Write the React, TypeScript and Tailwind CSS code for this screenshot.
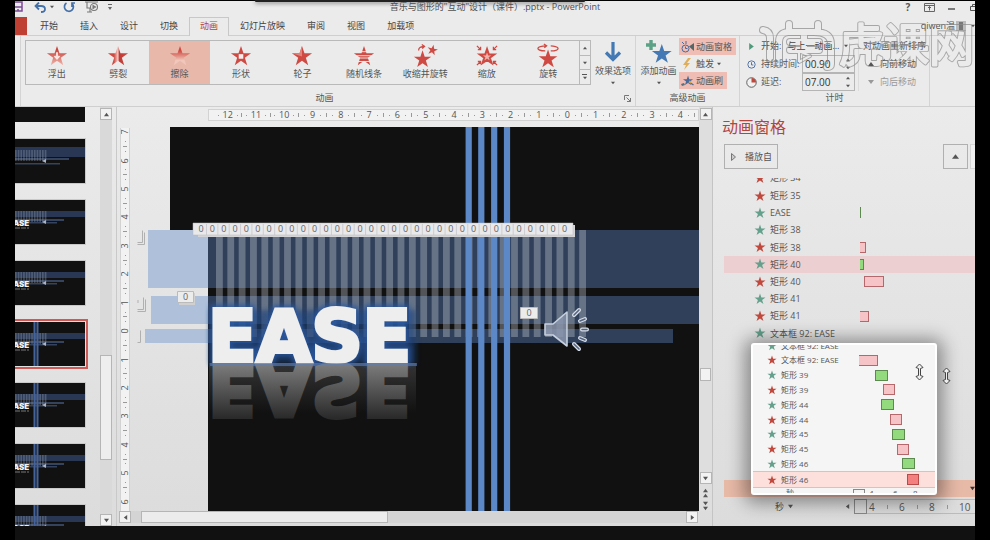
import React from 'react';
import { clsx } from 'clsx';

const STAR = '12,1 14.7,9 23,9 16.2,14 18.8,22 12,17.2 5.2,22 7.8,14 1,9 9.3,9';

type Tone = 'red' | 'green';
type BarTone = 'pink' | 'green' | 'red';

interface Effect {
  name: string;
  tone: Tone;
  start?: number;
  width?: number;
  bar?: BarTone;
  selected?: boolean;
}

const TABS = ['开始', '插入', '设计', '切换', '动画', '幻灯片放映', '审阅', '视图', '加载项'];

const GALLERY = ['浮出', '劈裂', '擦除', '形状', '轮子', '随机线条', '收缩并旋转', '缩放', '旋转'];

const EFFECTS: Effect[] = [
  { name: '矩形 35', tone: 'red' },
  { name: 'EASE', tone: 'green', start: 0, width: 1, bar: 'green' },
  { name: '矩形 38', tone: 'green' },
  { name: '矩形 38', tone: 'red', start: 0, width: 6, bar: 'pink' },
  { name: '矩形 40', tone: 'green', start: 0, width: 4, bar: 'green', selected: true },
  { name: '矩形 40', tone: 'red', start: 4, width: 20, bar: 'pink' },
  { name: '矩形 41', tone: 'green' },
  { name: '矩形 41', tone: 'red', start: 0, width: 9, bar: 'pink' },
  { name: '文本框 92: EASE', tone: 'green' },
];

const ZOOMED_EFFECTS: Effect[] = [
  { name: '文本框 92: EASE', tone: 'red', start: 0, width: 19, bar: 'pink' },
  { name: '矩形 39', tone: 'green', start: 16, width: 13, bar: 'green' },
  { name: '矩形 39', tone: 'red', start: 24, width: 12, bar: 'pink' },
  { name: '矩形 44', tone: 'green', start: 22, width: 13, bar: 'green' },
  { name: '矩形 44', tone: 'red', start: 31, width: 12, bar: 'pink' },
  { name: '矩形 45', tone: 'green', start: 33, width: 13, bar: 'green' },
  { name: '矩形 45', tone: 'red', start: 38, width: 12, bar: 'pink' },
  { name: '矩形 46', tone: 'green', start: 43, width: 13, bar: 'green' },
  { name: '矩形 46', tone: 'red', start: 48, width: 12, bar: 'red', selected: true },
];

const H_RULER = [12, 11, 10, 9, 8, 7, 6, 5, 4, 3, 2, 1, 0, 1, 2, 3, 4];
const V_RULER = [7, 6, 5, 4, 3, 2, 1, 0, 1, 2, 3, 4, 5, 6];

const Triangle: React.FC<{ dir: 'up' | 'down' | 'left' | 'right'; className?: string }> = ({ dir, className }) => {
  const points = {
    up: '0,5 3,1 6,5',
    down: '0,1 3,5 6,1',
    left: '5,0 1,3 5,6',
    right: '1,0 5,3 1,6',
  }[dir];
  return (
    <svg viewBox="0 0 6 6" className={clsx('shrink-0', className ?? 'w-[5px] h-[5px]')} aria-hidden="true">
      <polygon points={points} fill="currentColor" />
    </svg>
  );
};

const Star: React.FC<{ tone: Tone; className?: string }> = ({ tone, className }) => (
  <svg viewBox="0 0 24 24" className={clsx('shrink-0', className)} aria-hidden="true">
    <polygon points={STAR} fill={tone === 'red' ? '#c0483c' : '#64a08c'} />
  </svg>
);

const GalleryIcon: React.FC<{ kind: string }> = ({ kind }) => {
  const red = '#cf4a42';
  return (
    <svg viewBox="0 0 24 24" className="w-[22px] h-[22px] overflow-visible" aria-hidden="true">
      <defs>
        <linearGradient id="fadeDown" x1="0" y1="0" x2="0" y2="1">
          <stop offset="0.2" stopColor="#c9443c" />
          <stop offset="1" stopColor="#f0b5aa" />
        </linearGradient>
        <linearGradient id="wipe" x1="0" y1="0" x2="0" y2="1">
          <stop offset="0.25" stopColor="#cf4a42" />
          <stop offset="0.75" stopColor="#f1c7bb" />
        </linearGradient>
        <linearGradient id="split" x1="0" y1="0" x2="1" y2="0">
          <stop offset="0.3" stopColor="#cf4a42" />
          <stop offset="0.5" stopColor="#f3cfc8" />
          <stop offset="0.56" stopColor="#c23a34" />
          <stop offset="1" stopColor="#cf4a42" />
        </linearGradient>
      </defs>
      {kind === '浮出' && (
        <>
          <polygon points={STAR} fill="url(#fadeDown)" />
          <path d="M12 8v6M9.300 12l2.700 3 2.700-3" stroke="#f7e8e5" strokeWidth="2" fill="none" />
        </>
      )}
      {kind === '劈裂' && <polygon points={STAR} fill="url(#split)" />}
      {kind === '擦除' && <polygon points={STAR} fill="url(#wipe)" />}
      {kind === '形状' && (
        <>
          <polygon points={STAR} fill={red} />
          <rect x="9.500" y="10" width="5" height="5" fill="#f6eeee" />
        </>
      )}
      {kind === '轮子' && (
        <>
          <polygon points={STAR} fill={red} />
          <polygon points="12,1 12,12.5 1,9 9.3,9" fill="#e0847c" />
        </>
      )}
      {kind === '随机线条' && (
        <>
          <polygon points={STAR} fill={red} />
          <path d="M0 7.300h24M0 11.700h24M0 14.200h24M0 18h24" stroke="#ececec" strokeWidth="1" />
        </>
      )}
      {kind === '收缩并旋转' && (
        <>
          <polygon points={STAR} fill={red} transform="translate(-1 5) scale(.86)" />
          <polygon points={STAR} fill={red} transform="translate(14 -1) rotate(12 6 6) scale(.52)" />
          <path d="M5 6c0-3 2-4.500 6-4M8.500-.5l3 2-2.500 2.500" stroke={red} strokeWidth="1.400" fill="none" />
        </>
      )}
      {kind === '缩放' && (
        <>
          <polygon points={STAR} fill="#f0b2ab" stroke={red} strokeWidth="3" transform="translate(3.400 3.800) scale(.72)" />
          <path
            d="M1 1l4 4M5 2v3H2M23 1l-4 4M19 2v3h3M1 22l4-4M2 18h3v3M23 22l-4-4M22 18h-3v3"
            stroke={red}
            strokeWidth="1.400"
            fill="none"
          />
        </>
      )}
      {kind === '旋转' && (
        <>
          <polygon points={STAR} fill={red} transform="translate(1 4) scale(.92)" />
          <path d="M9 6.500C4 6.500 1 5 1 3.500S5 1 10 1M7.500-1L10.500 1 8 3M15 6.500c5 0 8-1.500 8-3S18 1 15 1" stroke={red} strokeWidth="1.400" fill="none" />
        </>
      )}
    </svg>
  );
};

const TitleBar = () => (
  <header className="relative flex h-4 items-start text-[#555]">
    <div className="flex flex-1 items-center">
      <button type="button" aria-label="保存" className="w-2 overflow-hidden">
        <svg viewBox="0 0 8 12" className="w-2 h-3" fill="none" stroke="#7b4a96" strokeWidth="1.500">
          <path d="M0 1h7v9H0M0 6h7M3 10V8" />
        </svg>
      </button>
      <button type="button" aria-label="撤消" className="ml-[11px] flex items-center gap-1">
        <svg viewBox="0 0 12 11" className="w-3 h-[11px]" fill="none" stroke="#4470a8" strokeWidth="1.800">
          <path d="M5 .5L1.500 4 5 7.500M2 4h5c3 0 4 1.500 4 3.200S9.500 10 7 10" />
        </svg>
        <Triangle dir="down" className="w-1 h-1" />
      </button>
      <button type="button" aria-label="恢复" className="ml-[9px]">
        <svg viewBox="0 0 12 12" className="w-3 h-3" fill="none" stroke="#4470a8" strokeWidth="1.700">
          <path d="M3.500 2A4.500 4.500 0 1 0 9 2.500M9 6V2h3" />
        </svg>
      </button>
      <button type="button" aria-label="从头开始" className="ml-[10px]">
        <svg viewBox="0 0 14 12" className="w-[14px] h-3" fill="none" stroke="#777" strokeWidth="1.100">
          <path d="M0 1h13M2 1v6h3M5 7v4M2 11h5" />
          <circle cx="9" cy="6" r="3.500" />
          <path d="M8 4.500v3L10.500 6z" fill="#777" />
        </svg>
      </button>
      <button type="button" aria-label="自定义快速访问工具栏" className="ml-2">
        <svg viewBox="0 0 6 8" className="w-[6px] h-2" fill="#666">
          <path d="M1 1h4v1H1zM1 4h4L3 7z" />
        </svg>
      </button>
    </div>
    <h1 className="text-[9px] leading-3 text-[#505050]">音乐与图形的"互动"设计（课件）.pptx - PowerPoint</h1>
    <div className="flex flex-1 items-center justify-end overflow-hidden">
      <button type="button" className="w-4 text-[10px] leading-3 font-bold">?</button>
      <button type="button" aria-label="功能区显示选项" className="ml-2">
        <svg viewBox="0 0 12 9" className="w-3 h-[9px]" fill="none" stroke="#666">
          <path d="M.5.5h10v8H.5zM.5 2.500h10M5.500 7.500v-4M4 5l1.500-1.500L7 5" />
        </svg>
      </button>
      <button type="button" aria-label="最小化" className="ml-3">
        <svg viewBox="0 0 8 9" className="w-2 h-[9px]" stroke="#555" strokeWidth="1.500"><path d="M0 6h7" /></svg>
      </button>
      <button type="button" aria-label="还原" className="ml-[14px]">
        <svg viewBox="0 0 5 9" className="w-[5px] h-[9px]" fill="none" stroke="#555"><path d="M5 3.500H.5v4H5M2.500 3V1.500H5" /></svg>
      </button>
    </div>
    {/* shadow of the bar docked above the window */}
    <div className="absolute -top-px left-1/4 h-[2px] w-[330px] rounded bg-[#222] shadow-[0_1px_4px_#555]" />
  </header>
);

const TabRow = () => (
  <nav className="flex h-[18px] items-stretch text-[9px] leading-[16px]">
    <button type="button" aria-label="文件" className="mr-[2px] w-3 bg-[#bf3f33]" />
    {TABS.map((tab) => (
      <a
        key={tab}
        href="#"
        className={clsx(
          'px-[10px] border-x border-t',
          tab === '动画'
            ? 'relative z-10 -mb-px border-[#c8c8c8] bg-[#ebebeb] text-[#b8433a]'
            : 'border-transparent text-[#444]'
        )}
      >
        {tab}
      </a>
    ))}
    <a href="#" className="ml-auto flex items-center gap-px overflow-hidden whitespace-nowrap text-[#555]">
      qiwen温
      <span className="flex h-[10px] w-[10px] items-center justify-center bg-[#bbb]"><span className="h-2 w-1 bg-[#777]" /></span>
      <Triangle dir="down" className="ml-1 w-1 h-1" />
    </a>
  </nav>
);

const Spinner: React.FC<{ id: string; value: string }> = ({ id, value }) => (
  <div className="flex h-[18px] w-[53px] items-center border border-[#b5b5b5] pr-1">
    <input id={id} defaultValue={value} className="w-0 flex-1 bg-transparent pl-[2px] text-[10px] text-[#333] outline-none" />
    <div className="flex flex-col gap-1 text-[#555]">
      <Triangle dir="up" className="w-1 h-1" />
      <Triangle dir="down" className="w-1 h-1" />
    </div>
  </div>
);

const Ribbon = () => (
  <section className="flex h-[72px] border-y border-[#cfcfcf] pl-[5px] text-[9px] leading-3 text-[#555]">
    <div className="flex flex-1 flex-col border-x border-[#d4d4d4] pl-1 pt-1">
      <div className="flex">
        <div className="flex h-[45px] flex-1 border border-[#b9b9b9]">
          {GALLERY.map((name) => (
            <button
              key={name}
              type="button"
              className={clsx('flex flex-1 basis-0 flex-col items-center gap-px pt-1', name === '擦除' && 'bg-[#e8b9ab]')}
            >
              <GalleryIcon kind={name} />
              <span className="whitespace-nowrap">{name}</span>
            </button>
          ))}
          <div className="flex w-[11px] flex-col divide-y divide-[#b9b9b9] border-l border-[#b9b9b9]">
            <button type="button" aria-label="上一行" className="flex flex-1 items-center justify-center"><Triangle dir="up" className="w-1 h-1" /></button>
            <button type="button" aria-label="下一行" className="flex flex-1 items-center justify-center"><Triangle dir="down" className="w-1 h-1" /></button>
            <button type="button" aria-label="其他" className="flex flex-1 flex-col items-center justify-center gap-px">
              <span className="h-px w-[5px] bg-current" />
              <Triangle dir="down" className="w-1 h-1" />
            </button>
          </div>
        </div>
        <button type="button" className="flex w-11 flex-col items-center">
          <svg viewBox="0 0 18 22" className="mt-px h-[22px] w-[18px]" fill="none" stroke="#4379b5" strokeWidth="3.200">
            <path d="M9 1v17M2 11.500l7 7 7-7" />
          </svg>
          <span className="mt-[2px]">效果选项</span>
          <Triangle dir="down" className="mt-1 w-1 h-1" />
        </button>
      </div>
      <div className="flex items-center justify-center pt-[7px]">
        <span className="flex-1 text-center">动画</span>
        <button type="button" aria-label="动画设置">
          <svg viewBox="0 0 7 7" className="mr-1 h-[7px] w-[7px]" fill="none" stroke="#777"><path d="M.5 5V.5H5M2.500 2.500l4 4M6.500 3v3.500H3" /></svg>
        </button>
      </div>
    </div>

    <div className="flex w-[104px] flex-col border-r border-[#d4d4d4] pt-[2px]">
      <div className="flex">
        <button type="button" className="flex w-[43px] flex-col items-center whitespace-nowrap pl-[2px]">
          <svg viewBox="0 0 26 24" className="mt-[2px] h-6 w-[26px]">
            <polygon points={STAR} fill="#4379b5" transform="translate(5 3) scale(.9)" />
            <path d="M5 0v10M0 5h10" stroke="#5ba287" strokeWidth="3.400" />
          </svg>
          <span className="mt-px">添加动画</span>
          <Triangle dir="down" className="mt-1 w-1 h-1" />
        </button>
        <div className="flex flex-col items-start">
          <button type="button" className="flex h-[17px] items-center gap-[2px] bg-[#efbdb3] pl-[2px] pr-1">
            <svg viewBox="0 0 13 12" className="h-3 w-[13px]" fill="none" stroke="#4a6a9c">
              <circle cx="4.500" cy="7.500" r="3.500" />
              <path d="M4.500 5.500v2h2M1 1l2 2M5 0v3" />
              <path d="M8 5.500L13 2v8z" fill="#566" stroke="none" />
            </svg>
            动画窗格
          </button>
          <button type="button" className="flex h-[17px] items-center gap-[2px] pl-[2px]">
            <svg viewBox="0 0 13 12" className="h-3 w-[13px]"><path d="M7 0L2 7h3l-2 5 6-7H6l4-5z" fill="#dfae5a" /></svg>
            触发
            <Triangle dir="down" className="ml-px w-1 h-1" />
          </button>
          <button type="button" className="flex h-[17px] items-center gap-[2px] bg-[#efbdb3] pl-[2px] pr-1">
            <svg viewBox="0 0 13 12" className="h-3 w-[13px]">
              <polygon points={STAR} fill="#4a6a9c" transform="translate(1.500 0) scale(.46)" />
              <path d="M0 9l3-1 1 2-3 1z" fill="#5a6f80" />
              <path d="M9.500 8l3 2" stroke="#5a6f80" strokeWidth="1.500" />
              <path d="M8 6.500l2 1" stroke="#d9a441" strokeWidth="2" />
            </svg>
            动画刷
          </button>
        </div>
      </div>
      <span className="pt-[3px] text-center">高级动画</span>
    </div>

    <div className="flex w-[190px] flex-col border-r border-[#d4d4d4] pt-[1px]">
      <div className="flex">
        <div className="flex w-[119px] flex-col border-r border-[#dcdcdc] pl-[6px]">
          <div className="flex h-[18px] items-center">
            <Triangle dir="right" className="ml-[2px] mr-[6px] h-[9px] w-[7px] text-[#4f9a7c]" />
            <label htmlFor="start" className="whitespace-nowrap">开始:</label>
            <select id="start" className="ml-[6px] w-[57px] appearance-none bg-transparent text-[9px] text-[#444]">
              <option>与上一动画...</option>
            </select>
            <Triangle dir="down" className="w-1 h-1" />
          </div>
          <div className="flex h-[18px] items-center">
            <svg viewBox="0 0 12 12" className="mr-1 h-[11px] w-[11px] shrink-0" fill="none" stroke="#4a6a9c">
              <circle cx="6" cy="6" r="4" />
              <path d="M6 3.500V6.500h2" />
            </svg>
            <label htmlFor="duration" className="w-[41px] whitespace-nowrap">持续时间:</label>
            <Spinner id="duration" value="00.90" />
          </div>
          <div className="flex h-[18px] items-center">
            <svg viewBox="0 0 12 12" className="mr-1 h-[11px] w-[11px] shrink-0" fill="#f1f1f1" stroke="#555">
              <circle cx="6" cy="6" r="5.200" />
              <path d="M6 1v5h5A5 5 0 0 0 6 1z" fill="#c0483c" stroke="none" />
            </svg>
            <label htmlFor="delay" className="w-[41px] whitespace-nowrap">延迟:</label>
            <Spinner id="delay" value="07.00" />
          </div>
        </div>
        <div className="flex flex-col pl-1">
          <span className="h-[18px] whitespace-nowrap leading-[18px]">对动画重新排序</span>
          <button type="button" className="flex h-[18px] items-center gap-[6px] pl-[5px]"><Triangle dir="up" className="h-[6px] w-[6px]" />向前移动</button>
          <button type="button" className="flex h-[18px] items-center gap-[6px] pl-[5px] text-[#999]"><Triangle dir="down" className="h-[6px] w-[6px]" />向后移动</button>
        </div>
      </div>
      <span className="pt-px text-center">计时</span>
    </div>
    <div className="w-[45px]" />
  </section>
);

const ScrollButton: React.FC<{ dir: 'up' | 'down' | 'left' | 'right' }> = ({ dir }) => (
  <button type="button" aria-label={dir} className="flex h-3 w-3 shrink-0 items-center justify-center border border-[#b5b5b5] bg-[#f2f2f2] text-[#555]">
    <Triangle dir={dir} />
  </button>
);

const Thumbnail: React.FC<{ text?: boolean; lines?: boolean; selected?: boolean }> = ({ text, lines, selected }) => (
  <button
    type="button"
    aria-label="幻灯片"
    className={clsx('h-11 w-[70px] shrink-0 bg-[#111]', selected ? 'outline-2 outline-offset-1 outline-[#cf5a55]' : 'outline outline-[#c9c9c9]')}
  >
    <svg viewBox="0 0 70 44" className="h-11 w-[70px]">
      <rect y={text ? 11 : 8} width="70" height={text ? 6 : 10} fill="#2a3754" />
      <rect x="0" y="19" width={text ? 49 : 54} height="2" fill="#35435f" />
      <rect x="0" y={text ? 22 : 24} width={text ? 42 : 45} height="1.500" fill="#35435f" />
      {Array.from({ length: 12 }, (_, i) => (
        <rect key={i} x={i * 2.7} y="11" width="1.700" height="11" fill="#8a95ad" opacity=".4" />
      ))}
      <path d="M27 22l4-2v4z" fill="#aab4c4" />
      {lines && <path d="M19.500 0v44M22.500 0v44" stroke="#44639a" strokeWidth="2" />}
      {text && (
        <>
          <text x="-7" y="26" fontSize="8" fontWeight="900" fill="#f2f2f2" fontFamily="Inter, sans-serif">EASE</text>
          <path d="M0 28h14" stroke="#666" strokeWidth="2" strokeDasharray="5 1" opacity=".6" />
        </>
      )}
    </svg>
  </button>
);

const ThumbnailPane = () => (
  <aside className="flex w-[102px] shrink-0 border-r border-[#c9c9c9]">
    <div className="h-[419px] flex-1 overflow-hidden">
      <div className="flex flex-col gap-[17px]">
        <div className="h-[15px] w-[70px] bg-[#111]" />
        <Thumbnail />
        <Thumbnail text />
        <Thumbnail text />
        <Thumbnail text lines selected />
        <Thumbnail text lines />
        <Thumbnail text lines />
        <Thumbnail text lines />
      </div>
    </div>
    <div className="mr-1 flex w-3 flex-col bg-[#d9d9d9] pt-px">
      <ScrollButton dir="up" />
      <div className="flex-[236]" />
      <div className="flex-[103] border border-[#b5b5b5] bg-[#eee]" />
      <div className="flex-[54]" />
      <ScrollButton dir="down" />
    </div>
  </aside>
);

const RulerMark: React.FC<{ value: number; vertical?: boolean }> = ({ value, vertical }) => (
  <div className={clsx('flex flex-1 basis-0 items-center', vertical && 'flex-col')}>
    <div className={clsx('flex flex-1 items-center justify-evenly', vertical && 'flex-col')}>
      <i className="h-px w-px bg-[#999]" />
      <span className={clsx('text-[9px] leading-[10px]', vertical && '-rotate-90')}>{value}</span>
      <i className="h-px w-px bg-[#999]" />
    </div>
    <i className={clsx('bg-[#999]', vertical ? 'h-px w-1' : 'h-1 w-px')} />
  </div>
);

const Slide = () => (
  <svg viewBox="131 122 568 389" preserveAspectRatio="xMinYMin slice" className="h-[389px] w-full">
    <defs>
      <filter id="glow" x="-20%" y="-40%" width="140%" height="180%">
        <feGaussianBlur stdDeviation="2.500" />
      </filter>
      <linearGradient id="reflect" gradientUnits="userSpaceOnUse" x1="0" y1="362" x2="0" y2="308">
        <stop offset="0" stopColor="#7c7c7c" />
        <stop offset="1" stopColor="#2a2a2a" />
      </linearGradient>
      <linearGradient id="floor" x1="0" y1="0" x2="0" y2="1">
        <stop offset="0" stopColor="#444" />
        <stop offset="1" stopColor="#111" />
      </linearGradient>
    </defs>
    <rect x="170" y="127" width="529" height="103" fill="#111" />
    <rect x="208" y="229" width="491" height="282" fill="#111" />
    <path d="M148 230h60v58h-60zM151 296h57v28h-57zM145 329h63v14h-63z" fill="#afc0da" />
    <path d="M208 230h491v58H208zM208 296h491v28H208zM208 329h465v14H208z" fill="#30405a" />
    {Array.from({ length: 33 }, (_, i) => (
      <rect key={i} x={216 + i * 11.35} y="230" width="6.800" height="107" fill="#c8cdd8" opacity=".36" />
    ))}
    <path d="M468.700 127v384M481.300 127v384M494.200 127v384M507 127v384" stroke="#5d88c8" strokeWidth="6.200" />

    {/* title with its glow and mirrored copy */}
    <rect x="209" y="363" width="207" height="50" fill="url(#floor)" opacity=".7" />
    <rect x="210" y="310" width="206" height="54" fill="#1c3f78" opacity=".6" filter="url(#glow)" />
    <g fontFamily="'DejaVu Sans', 'Liberation Sans', sans-serif" fontWeight="700" fontSize="71">
      <text x="208" y="361" fill="none" stroke="#2a58a0" strokeWidth="9" opacity=".85" filter="url(#glow)">EASE</text>
      <g transform="matrix(1 0 0 -1 0 726)">
        <text x="208" y="361" fill="url(#reflect)" stroke="url(#reflect)" strokeWidth="4">EASE</text>
      </g>
      <text x="208" y="361" fill="#eeeeee" stroke="#eeeeee" strokeWidth="4">EASE</text>
    </g>
    <path d="M210 364.500h207" stroke="#5b7db8" strokeWidth="3" opacity=".6" />

    {/* order tags */}
    <path d="M198 225h377v12H198z" fill="#d5d5d8" />
    <path d="M193 223h380v12H193z" fill="#e9e9eb" stroke="#bbb" strokeWidth=".5" />
    <g fontFamily="'Open Sans', sans-serif" fontSize="9" fill="#666" textAnchor="middle">
      {Array.from({ length: 33 }, (_, i) => (
        <text key={i} x={201 + i * 11.36} y="232">0</text>
      ))}
      <path d="M179 293h16v12h-16z" fill="#d0d0d0" />
      <path d="M177.500 291.500h16v11h-16zM520.500 307.500h17v11h-17z" fill="#ececec" stroke="#bbb" />
      <text x="185.500" y="300">0</text>
      <text x="529" y="316">0</text>
    </g>
    {Array.from({ length: 32 }, (_, i) => (
      <path key={i} d={`M${206.5 + i * 11.36} 224v11`} stroke="#c2c2c6" strokeWidth=".7" />
    ))}
    <path d="M137.500 242.500h5v-12M137.500 244.500h7v-12M137.500 309.500h6v-12M137.500 311.500h8v-12M138 303v-3M137.500 342.500h3v-12" fill="none" stroke="#b0b0b0" />

    <g strokeLinejoin="round">
      <path d="M545 324h8l14-12v34l-14-11h-8z" fill="#8997ae" fillOpacity=".85" stroke="#c6d0de" strokeWidth="1.600" />
      <g fill="none" strokeLinecap="round">
        <path d="M574 315l5-5M580 321l5-2M582 329.500h5M580 338l5 2M574 344l5 5" stroke="#d5dde8" strokeWidth="4" />
        <path d="M574 315l5-5M580 321l5-2M582 329.500h5M580 338l5 2M574 344l5 5" stroke="#55647c" strokeWidth="1.500" />
      </g>
    </g>
  </svg>
);

const Editor = () => (
  <main className="flex min-w-0 flex-1 flex-col pl-[2px] text-[#555]">
    <div className="flex flex-1">
      <div className="flex w-3 flex-col pl-px pt-[21px]">
        <div className="flex h-[383px] w-[10px] flex-col justify-center overflow-hidden border-x border-[#d2d2d2] bg-[#f2f2f2] pb-1">
          <div className="flex h-[398px] shrink-0 flex-col">
            {V_RULER.map((v, i) => <RulerMark key={i} value={v} vertical />)}
          </div>
        </div>
      </div>
      <div className="flex min-w-0 flex-1 flex-col">
        <div className="ml-[77px] mt-[2px] flex h-3 border border-[#d2d2d2] bg-[#f2f2f2] pl-[5px] pr-[3px]">
          {H_RULER.map((v, i) => <RulerMark key={i} value={v} />)}
        </div>
        <div className="mt-px h-[389px] overflow-hidden">
          <Slide />
        </div>
      </div>
      <div className="flex w-[13px] flex-col items-center bg-[#dedede] pt-px text-[#555]">
        <ScrollButton dir="up" />
        <div className="flex-[248]" />
        <div className="h-[13px] w-[11px] border border-[#b5b5b5] bg-[#f2f2f2]" />
        <div className="flex-[91]" />
        <ScrollButton dir="down" />
        <button type="button" aria-label="上一张幻灯片" className="mt-1 flex flex-col"><Triangle dir="up" /><Triangle dir="up" /></button>
        <button type="button" aria-label="下一张幻灯片" className="mt-[3px] flex flex-col"><Triangle dir="down" /><Triangle dir="down" /></button>
      </div>
    </div>
    <div className="flex h-[15px] items-start pr-[14px]">
      <ScrollButton dir="left" />
      <div className="flex h-3 flex-1 bg-[#d4d4d4] pl-[10px]">
        <div className="w-[247px] border border-[#b5b5b5] bg-[#ececec]" />
      </div>
      <ScrollButton dir="right" />
    </div>
  </main>
);

const EffectRow: React.FC<{ effect: Effect; zoomed?: boolean }> = ({ effect, zoomed }) => (
  <li
    className={clsx(
      'flex flex-1 basis-0 items-center whitespace-nowrap',
      zoomed ? 'pl-[14px]' : 'pl-[30px]',
      effect.selected && (zoomed ? 'border-y border-[#eeb9b3] bg-[#fde0dc]' : 'bg-[#eccfd0]')
    )}
  >
    <Star tone={effect.tone} className={zoomed ? 'h-[10px] w-[10px]' : 'h-3 w-3'} />
    <span className={clsx('pl-1', zoomed ? 'w-[82px] text-[8px]' : 'w-[94px] text-[9px]')}>{effect.name}</span>
    {effect.bar && (
      <span
        className={clsx(
          'h-[11px] border',
          effect.bar === 'pink' && 'border-[#b5686c] bg-[#f6c3c6]',
          effect.bar === 'green' && 'border-[#5c8a4e] bg-[#93da7e]',
          effect.bar === 'red' && 'border-[#b84a4a] bg-[#f47f7f]',
          effect.start === 0 && effect.width !== 1 && 'border-l-0',
          effect.width === 1 && 'border-r-0'
        )}
        style={{ marginLeft: effect.start, width: effect.width }}
      />
    )}
  </li>
);

const ResizeCursor: React.FC<{ className?: string }> = ({ className }) => (
  <svg viewBox="0 0 9 18" className={clsx('h-[18px] w-[9px]', className)} fill="#eee" stroke="#444" strokeWidth="1" strokeLinejoin="round">
    <path d="M4.500 1L8 4.500 5.500 5.500v7L8 13.500 4.500 17 1 13.500l2.500-1v-7L1 4.500z" />
  </svg>
);

const ZoomedList = () => (
  <div className="absolute left-[38px] top-[236px] h-[152px] w-[186px] overflow-visible rounded-[3px] border-2 border-white bg-[#f5f5f5] shadow-[0_2px_18px_6px_#0006]">
    <div className="flex h-full flex-col overflow-hidden text-[8px] text-[#555]">
      <div className="flex h-2 shrink-0 items-end overflow-hidden pb-[2px] pl-[14px] leading-[10px]">
        <Star tone="green" className="h-[10px] w-[10px]" />
        <span className="pl-1">文本框 92: EASE</span>
      </div>
      <ul className="flex h-[135px] shrink-0 flex-col">
        {ZOOMED_EFFECTS.map((effect, i) => <EffectRow key={i} effect={effect} zoomed />)}
      </ul>
      <div className="mt-px flex h-1 items-start overflow-hidden pl-[33px] text-[8px] leading-[8px]">
        <span className="w-[67px]">秒</span>
        <span className="h-3 w-3 border border-[#888]" />
        <span className="w-6 pl-1">4</span>
        <span className="w-6 pl-1">6</span>
        <span>8</span>
      </div>
    </div>
    <ResizeCursor className="absolute right-[11px] top-[18px]" />
  </div>
);

const AnimationPane = () => (
  <aside className="relative flex w-[263px] shrink-0 flex-col overflow-hidden border-l border-[#c4c4c4] text-[#555]">
    <h2 className="pl-[9px] pt-2 text-base leading-6 text-[#b2463f]">动画窗格</h2>
    <div className="mt-[5px] flex h-[25px] pl-[11px] text-[9px]">
      <button type="button" className="flex w-[54px] items-center gap-[9px] border border-[#b0b0b0] pl-[6px] whitespace-nowrap">
        <svg viewBox="0 0 5 8" className="h-2 w-[5px]" fill="#ccc" stroke="#777"><path d="M.5.5v7L4.500 4z" /></svg>
        播放自
      </button>
      <button type="button" aria-label="上移" className="ml-auto flex w-[25px] items-center justify-center border border-[#b0b0b0]">
        <Triangle dir="up" className="h-[7px] w-[7px]" />
      </button>
      <button type="button" aria-label="下移" className="ml-[2px] w-[5px] border-y border-l border-[#d5d5d5] bg-[#efefef]" />
    </div>
    <div className="ml-[11px] mt-[9px] flex h-[9px] items-end overflow-hidden pb-[3px] pl-[30px] text-[9px] leading-3">
      <Star tone="red" className="h-3 w-3" />
      <span className="pl-1">矩形 34</span>
    </div>
    <ul className="ml-[11px] flex h-[155px] flex-col">
      {EFFECTS.map((effect, i) => <EffectRow key={i} effect={effect} />)}
    </ul>
    <div className="ml-[11px] mt-[138px] flex h-[17px] items-center justify-end overflow-hidden bg-[#e7b9a7] text-[#333]">
      <Triangle dir="down" />
    </div>
    <div className="mt-[2px] flex h-[15px] items-center pl-[62px] text-[10px] leading-3">
      <button type="button" className="flex w-[70px] shrink-0 items-center gap-1 text-[9px]">秒<Triangle dir="down" /></button>
      <Triangle dir="left" />
      <span className="ml-1 h-[15px] w-[13px] shrink-0 border border-[#888]" />
      <div className="flex h-[15px] flex-1 items-center border-y border-[#bbb] pl-[2px]">
        {[4, 6, 8].map((n) => (
          <span key={n} className="flex w-[30px] shrink-0 items-center gap-3">
            {n}
            <i className="h-1 w-px bg-[#999]" />
          </span>
        ))}
        <span>10</span>
      </div>
    </div>
    <ZoomedList />
    <ResizeCursor className="absolute right-6 top-[260px]" />
  </aside>
);

const Watermark = () => (
  <svg viewBox="755 15 220 60" className="pointer-events-none absolute right-[15px] top-[15px] h-[60px] w-[220px]">
    <mask id="outline" maskUnits="userSpaceOnUse" x="755" y="15" width="220" height="60">
      {[
        { color: '#fff', mark: 8, text: 4 },
        { color: '#000', mark: 6, text: 2.2 },
      ].map(({ color, mark, text }) => (
        <g key={color} strokeLinecap="round" strokeLinejoin="round" stroke={color} fill="none">
          <path
            strokeWidth={mark}
            d="M763 30q7 1 7 8v20M779 64V42q0-9 9-10h26q17 0 17 12v20q0 3-4 3M789 24v8M818 24v8M790 42h29M804 33v15M790 50h29"
          />
          <path strokeWidth={mark - 4} d="M799 51l11 5-11 6z" />
          <text x="839" y="62" fontSize="45" fontWeight="400" strokeWidth={text} fill={color} fontFamily="'Noto Sans CJK SC', sans-serif">
            虎课网
          </text>
        </g>
      ))}
    </mask>
    <rect x="755" y="15" width="220" height="60" fill="#8a8a8a" opacity=".7" mask="url(#outline)" />
  </svg>
);

export default function App() {
  return (
    <div className="relative flex min-h-screen flex-col overflow-hidden bg-black px-[15px] pt-px font-['Open_Sans','Noto_Sans_CJK_SC',sans-serif]">
      <div className="flex flex-col bg-[#ebebeb]">
        <TitleBar />
        <TabRow />
        <Ribbon />
        <div className="flex h-[419px] bg-linear-to-b from-[#ebebeb] to-[#dcdcdc]">
          <ThumbnailPane />
          <Editor />
          <AnimationPane />
        </div>
      </div>
      <footer className="flex-1 bg-[#111]" />
      <Watermark />
    </div>
  );
}
